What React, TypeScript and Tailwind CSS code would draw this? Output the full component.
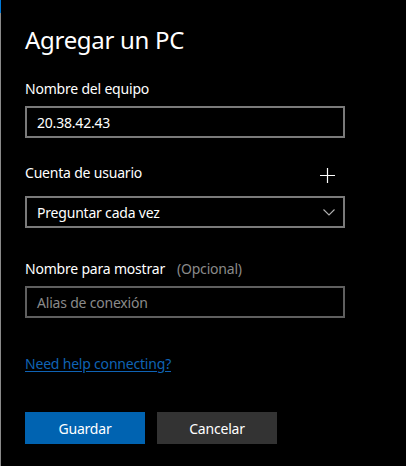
const font = { fontFamily: '"Noto Sans", "Open Sans", sans-serif' };

export default function App() {
  return (
    <div className="flex h-[466px] w-[406px] bg-black text-white" style={font}>
      <div className="flex w-px flex-col bg-[#8a8a8a]">
        <span className="h-[13px] w-px bg-[#0078d7]" />
      </div>
      <div className="flex flex-1 flex-col pl-[24px] pr-[61px] pt-[25px] tracking-[-0.2px]">
        <h1 className="text-[24px] leading-[30px] font-normal tracking-[-0.3px]">Agregar un PC</h1>

        <label className="mt-[25px] text-[14px] leading-[18px]">Nombre del equipo</label>
        <div className="mt-[8px] flex h-[32px] items-center border-2 border-[#7a7a7a] px-[10px] text-[14px]">
          20.38.42.43
        </div>

        <div className="mt-[26px] flex h-[18px] items-start justify-between">
          <span className="text-[14px] leading-[18px]">Cuenta de usuario</span>
          <svg className="mr-[10px] mt-[4px]" width="15" height="15" viewBox="0 0 15 15">
            <path d="M0 7.5H15M7.5 0V15" stroke="white" strokeWidth="1.2" fill="none" />
          </svg>
        </div>
        <div className="mt-[14px] flex h-[32px] items-center justify-between border-2 border-[#7a7a7a] pl-[10px] pr-[8px] text-[14px]">
          <span>Preguntar cada vez</span>
          <svg width="12" height="7" viewBox="0 0 12 7">
            <path d="M0.5 0.5L6 6L11.5 0.5" stroke="#b0b0b0" strokeWidth="1.1" fill="none" />
          </svg>
        </div>

        <div className="mt-[32px] flex items-baseline gap-[12px] text-[14px] leading-[18px]">
          <span>Nombre para mostrar</span>
          <span className="text-[#8a8a8a]">(Opcional)</span>
        </div>
        <div className="mt-[8px] flex h-[32px] items-center border-2 border-[#5f5f5f] px-[10px] text-[14px] text-[#8a8a8a]">
          Alias de conexión
        </div>

        <a className="mt-[37px] self-start text-[14px] leading-[18px] text-[#0f63b5] underline underline-offset-2">
          Need help connecting?
        </a>

        <div className="mt-[39px] flex gap-[12px]">
          <button className="h-[32px] w-[120px] bg-[#0063b1] text-[14px] text-white">Guardar</button>
          <button className="h-[32px] w-[120px] bg-[#333333] text-[14px] text-white">Cancelar</button>
        </div>
      </div>
    </div>
  );
}
